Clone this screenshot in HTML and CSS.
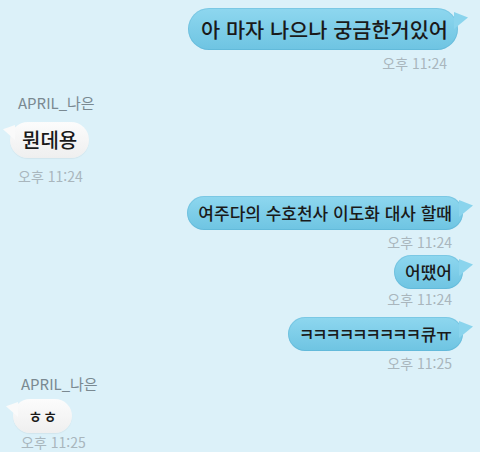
FILE: index.html
```html
<!DOCTYPE html>
<html lang="ko">
<head>
    <meta charset="UTF-8">
    <title>채팅</title>
    <link rel="stylesheet" href="styles.css">
</head>
<body>
    <div class="chat">
        <div class="row mine r1">
            <div class="bubble big">아 마자 나으나 궁금한거있어</div>
            <div class="time">오후 11:24</div>
        </div>

        <div class="row theirs r2">
            <div class="name">APRIL_나은</div>
            <div class="bubble mid">뭔데용</div>
            <div class="time">오후 11:24</div>
        </div>

        <div class="row mine r3">
            <div class="bubble">여주다의 수호천사 이도화 대사 할때</div>
            <div class="time">오후 11:24</div>
        </div>

        <div class="row mine r4">
            <div class="bubble">어땠어</div>
            <div class="time">오후 11:24</div>
        </div>

        <div class="row mine r5">
            <div class="bubble"><span class="jamo">ㅋㅋㅋㅋㅋㅋㅋㅋㅋ</span>큐ㅠ</div>
            <div class="time">오후 11:25</div>
        </div>

        <div class="row theirs r6">
            <div class="name">APRIL_나은</div>
            <div class="bubble small">ㅎㅎ</div>
            <div class="time">오후 11:25</div>
        </div>
    </div>
</body>
</html>
```

FILE: styles.css
```css
body {
    margin: 0;
    background: #dcf1f9;
    font-family: "Noto Sans CJK KR", "Noto Sans", sans-serif;
    color: #1a1a1a;
}
.chat {
    display: flex;
    flex-direction: column;
    padding: 8px 17px 0 10px;
}
.row {
    display: flex;
    flex-direction: column;
}
.mine {
    align-items: flex-end;
}
.theirs {
    align-items: flex-start;
}

/* bubbles */
.bubble {
    position: relative;
    font-size: 17px;
    font-weight: 500;
    line-height: 22px;
    padding: 6px 11px;
    border-radius: 17px;
    white-space: nowrap;
}
.bubble.big {
    font-size: 20.8px;
    line-height: 28px;
    padding: 7px 10px 7px 13px;
    border-radius: 21px;
}
.bubble.mid {
    font-size: 20px;
    line-height: 26px;
    padding: 5px 12px;
    border-radius: 18px;
}
.bubble.small {
    font-size: 16px;
    padding: 6px 15px;
}
.jamo {
    letter-spacing: -2.3px;
    margin-right: 2px;
}
.mine .bubble {
    background: linear-gradient(#8ed7ef, #6ec4e2);
    box-shadow: inset 0 0 0 1px rgba(60, 150, 190, 0.22);
}
.theirs .bubble {
    background: linear-gradient(#fcfcfc, #efefef);
    box-shadow: 0 1px 1px rgba(0, 0, 0, 0.05);
}
.mine .bubble::after {
    content: "";
    position: absolute;
    right: -10px;
    top: 4px;
    width: 14px;
    height: 17px;
    background: #8ad4ed;
    clip-path: polygon(0 0, 100% 32%, 0 100%);
}
.theirs .bubble::before {
    content: "";
    position: absolute;
    left: -7px;
    top: 3px;
    width: 12px;
    height: 15px;
    background: #fafafa;
    clip-path: polygon(0 28%, 100% 0, 100% 100%);
}

/* meta */
.time {
    font-size: 14px;
    line-height: 16px;
    color: #a9b6bd;
    padding: 0 11px 0 8px;
}
.name {
    font-size: 15px;
    line-height: 18px;
    color: #7a8991;
    margin-left: 8px;
}

/* vertical rhythm, per message */
.r1 { margin-right: 5px; }
.r1 .time { margin-top: 5px; }
.r2 { margin-top: 23px; }
.r2 .bubble { margin-top: 10px; }
.r2 .time { margin-top: 10px; }
.r3 { margin-top: 12px; }
.r3 .time { margin-top: 4px; }
.r4 { margin-top: 5px; }
.r4 .time { margin-top: 2px; }
.r5 { margin-top: 10px; }
.r5 .time { margin-top: 4px; }
.r6 { margin-top: 4px; padding-left: 3px; }
.r6 .bubble { margin-top: 6px; }
.r6 .time { margin-top: 1px; }
```
